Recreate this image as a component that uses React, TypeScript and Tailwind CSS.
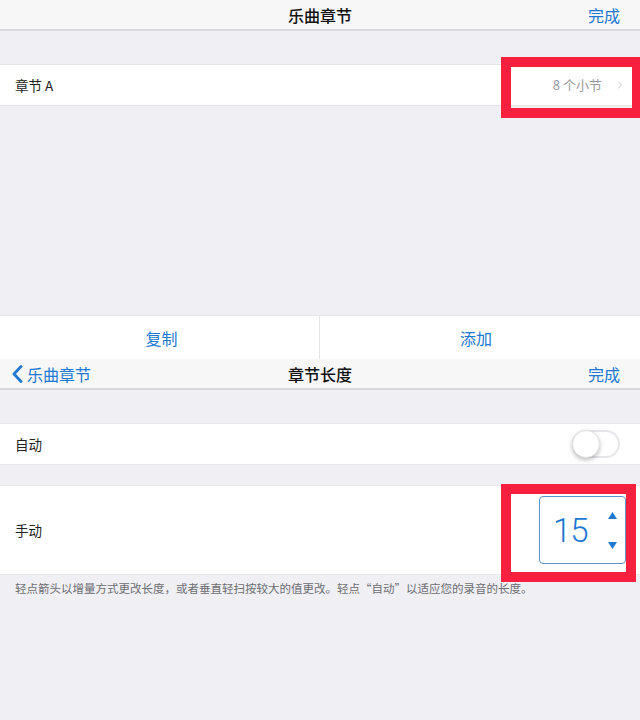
import { ChevronRight } from 'lucide-react';

const font = { fontFamily: '"Noto Sans CJK SC", "Noto Sans", sans-serif' };

function NavBar({ title, back }: { title: string; back?: string }) {
  return (
    <div className="relative h-[31px] bg-[#f7f7f8] border-b-2 border-[#d9d9dc] flex items-center justify-between px-[12px]">
      <div className="flex items-center text-[#2178d2] text-[16px]">
        {back && (
          <>
            <svg width="11" height="18" viewBox="0 0 11 18" className="mt-[1px]">
              <path d="M9 1.5L2 9l7 7.5" fill="none" stroke="#2178d2" strokeWidth="2.8" strokeLinecap="round" strokeLinejoin="round" />
            </svg>
            <span className="ml-[4px]">{back}</span>
          </>
        )}
      </div>
      <div className="absolute left-0 right-0 text-center text-[16px] font-medium text-[#111] pointer-events-none">{title}</div>
      <span className="text-[#2178d2] text-[16px] pr-[8px]">完成</span>
    </div>
  );
}

export default function App() {
  return (
    <div className="relative w-[640px] h-[720px] bg-[#efeff4] overflow-hidden" style={font}>
      <NavBar title="乐曲章节" />
      <div className="h-[33px]" />
      <div className="h-[42px] bg-white border-y border-[#e3e3e8] flex items-center justify-between pl-[15px] pr-[14px]">
        <span className="text-[13.5px] text-[#222]">章节 A</span>
        <div className="flex items-center gap-[12px] text-[#9a9aa0] text-[13px]">
          <span>8 个小节</span>
          <ChevronRight className="w-[12px] h-[18px] text-[#c4c4c8]" strokeWidth={2} />
        </div>
      </div>
      <div className="h-[209px]" />
      <div className="h-[44px] bg-white border-t border-[#e3e3e8] grid grid-cols-2 text-[#2178d2] text-[16px]">
        <div className="flex items-center justify-center border-r border-[#e3e3e8] pl-[4px]">复制</div>
        <div className="flex items-center justify-center pr-[8px]">添加</div>
      </div>
      <NavBar title="章节长度" back="乐曲章节" />
      <div className="h-[33px]" />
      <div className="h-[42px] bg-white border-y border-[#e7e7ec] flex items-center justify-between pl-[15px] pr-[20px]">
        <span className="text-[13.5px] text-[#222]">自动</span>
        <div className="relative w-[48px] h-[28px] rounded-full border-2 border-[#e6e6ea] bg-white">
          <div className="absolute -left-[2px] -top-[2px] w-[28px] h-[28px] rounded-full bg-white shadow-[0_2px_4px_rgba(0,0,0,0.25)] border border-[#e2e2e2]" />
        </div>
      </div>
      <div className="h-[20px]" />
      <div className="h-[90px] bg-white border-y border-[#e7e7ec] flex items-center justify-between pl-[15px] pr-[14px]">
        <span className="text-[13.5px] text-[#222]">手动</span>
        <div className="w-[87px] h-[68px] border border-[#5b93cc] rounded-[4px] flex items-center pl-[13px] pr-[8px]">
          <span className="text-[33px] font-light text-[#2178d2] leading-none tracking-[-1px]" style={{ fontFamily: 'Roboto, "Open Sans", sans-serif' }}>15</span>
          <div className="ml-auto flex flex-col items-center gap-[23px]">
            <svg width="9" height="7" viewBox="0 0 9 7"><path d="M4.5 0L9 7H0Z" fill="#2178d2" /></svg>
            <svg width="9" height="7" viewBox="0 0 9 7"><path d="M0 0H9L4.5 7Z" fill="#2178d2" /></svg>
          </div>
        </div>
      </div>
      <p className="pl-[15px] pt-[5px] text-[11.5px] text-[#6d6d72]">轻点箭头以增量方式更改长度，或者垂直轻扫按较大的值更改。轻点“自动”以适应您的录音的长度。</p>

      <div className="absolute left-[501px] top-[57px] w-[139px] h-[61px] border-[10px] border-r-[8px] border-[#f7203f]" />
      <div className="absolute left-[501px] top-[484px] w-[135px] h-[98px] border-[10px] border-[#f7203f]" />
    </div>
  );
}
